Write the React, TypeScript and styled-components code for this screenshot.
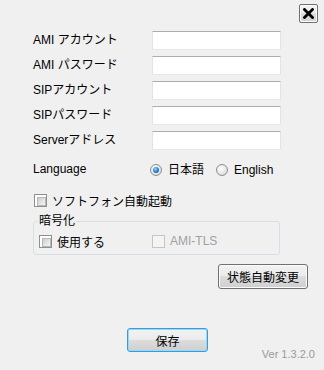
import React from "react";
import styled, { createGlobalStyle } from "styled-components";

const Global = createGlobalStyle`
  html, body { margin: 0; padding: 0; background: #f0f0f0; }
  body { font-family: "Liberation Sans", "Noto Sans CJK JP", sans-serif; font-size: 12px; color: #000; }
  * { box-sizing: border-box; }
`;

const Window = styled.div`
  width: 324px;
  height: 370px;
  background: #f0f0f0;
  display: flex;
  flex-direction: column;
  overflow: hidden;
`;

const TopBar = styled.div`
  display: flex;
  justify-content: flex-end;
  padding: 4px 6px 0 0;
  height: 23px;
`;

const CloseButton = styled.button`
  width: 19px;
  height: 19px;
  padding: 0;
  border: 1px solid #707070;
  border-radius: 2px;
  background: linear-gradient(#f4f4f4 0%, #ececec 50%, #dedede 50%, #d2d2d2 100%);
  box-shadow: inset 0 0 0 1px #fcfcfc;
  display: flex;
  align-items: center;
  justify-content: center;
`;

const Form = styled.div`
  display: grid;
  grid-template-columns: 119px 129px;
  row-gap: 6px;
  align-items: center;
  margin: 8px 0 0 33px;
`;

const Label = styled.span`
  line-height: 19px;
  white-space: nowrap;
`;

const TextInput = styled.input`
  width: 129px;
  height: 19px;
  margin: 0;
  padding: 0 3px;
  background: #fff;
  border: 1px solid #e2e3ea;
  border-top-color: #abadb3;
  border-bottom-color: #e3e9ef;
  border-radius: 1px;
  font: inherit;
  outline: none;
`;

const LangRow = styled.div`
  display: grid;
  grid-template-columns: 117px auto;
  align-items: center;
  margin: 10px 0 0 33px;
  height: 16px;
`;

const RadioGroup = styled.div`
  display: flex;
  align-items: center;
`;

const RadioItem = styled.label<{ $first?: boolean }>`
  display: flex;
  align-items: center;
  gap: 6px;
  margin-left: ${(p) => (p.$first ? "0" : "12px")};
  line-height: 16px;
`;

const RadioCircle = styled.span<{ $checked?: boolean }>`
  width: 12px;
  height: 12px;
  border-radius: 50%;
  border: 1px solid #8e8f8f;
  background: radial-gradient(circle at 40% 35%, #ffffff 0%, #e4e4e4 60%, #cfcfcf 100%);
  display: flex;
  align-items: center;
  justify-content: center;
  flex: none;
  &::after {
    content: "";
    display: ${(p) => (p.$checked ? "block" : "none")};
    width: 6px;
    height: 6px;
    border-radius: 50%;
    background: radial-gradient(circle at 40% 35%, #9fdcff 0%, #2e8ad8 45%, #0d4c8a 100%);
  }
`;

const CheckRow = styled.label<{ $disabled?: boolean }>`
  display: flex;
  align-items: center;
  gap: 5px;
  height: 14px;
  color: ${(p) => (p.$disabled ? "#a0a0a0" : "#000")};
`;

const AutoStart = styled(CheckRow)`
  margin: 17px 0 0 34px;
`;

const CheckBox = styled.span<{ $disabled?: boolean }>`
  width: 13px;
  height: 13px;
  flex: none;
  border: 1px solid ${(p) => (p.$disabled ? "#c5c5c5" : "#8e8f8f")};
  background: ${(p) => (p.$disabled ? "#f4f4f4" : "#fff")};
  padding: 2px;
  &::after {
    content: "";
    display: block;
    width: 100%;
    height: 100%;
    background: ${(p) =>
      p.$disabled
        ? "#f4f4f4"
        : "linear-gradient(135deg, #cbcbcb 0%, #e6e6e6 60%, #f4f4f4 100%)"};
    border: ${(p) => (p.$disabled ? "none" : "1px solid #b8b8b8")};
  }
`;

const Group = styled.fieldset`
  width: 247px;
  margin: 7px 0 0 33px;
  padding: 6px 4px 6px 4px;
  border: 1px solid #d5dfe5;
  border-radius: 3px;
  min-width: 0;
`;

const Legend = styled.legend`
  padding: 0 1px;
  line-height: 14px;
`;

const GroupRow = styled.div`
  display: grid;
  grid-template-columns: 113px auto;
  padding-left: 1px;
`;

const ActionRow = styled.div`
  display: flex;
  justify-content: flex-end;
  padding-right: 16px;
  margin-top: 9px;
`;

const PushButton = styled.button<{ $default?: boolean }>`
  height: ${(p) => (p.$default ? "24px" : "25px")};
  width: ${(p) => (p.$default ? "81px" : "90px")};
  padding: 0;
  font: inherit;
  font-size: 12px;
  color: #000;
  border: 1px solid ${(p) => (p.$default ? "#3c9ad8" : "#707070")};
  border-radius: 3px;
  background: linear-gradient(#f2f2f2 0%, #ebebeb 50%, #dddddd 50%, #cfcfcf 100%);
  box-shadow: inset 0 0 0 1px ${(p) => (p.$default ? "#8fdcfa" : "#fbfbfb")};
`;

const BottomRow = styled.div`
  display: flex;
  justify-content: space-between;
  align-items: flex-start;
  margin-top: 39px;
  padding: 0 9px 0 127px;
`;

const Version = styled.span`
  margin-top: 20px;
  font-size: 11px;
  line-height: 13px;
  color: #9a9a9a;
`;

const fields = ["AMI アカウント", "AMI パスワード", "SIPアカウント", "SIPパスワード", "Serverアドレス"];

export default function App() {
  return (
    <>
      <Global />
      <Window>
        <TopBar>
          <CloseButton aria-label="閉じる">
            <svg width="11" height="11" viewBox="0 0 11 11">
              <path d="M1.5 1.5 L9.5 9.5 M9.5 1.5 L1.5 9.5" stroke="#000" strokeWidth="2.8" strokeLinecap="square" />
            </svg>
          </CloseButton>
        </TopBar>
        <Form>
          {fields.map((f) => (
            <React.Fragment key={f}>
              <Label>{f}</Label>
              <TextInput />
            </React.Fragment>
          ))}
        </Form>
        <LangRow>
          <Label>Language</Label>
          <RadioGroup>
            <RadioItem $first>
              <RadioCircle $checked />
              日本語
            </RadioItem>
            <RadioItem>
              <RadioCircle />
              English
            </RadioItem>
          </RadioGroup>
        </LangRow>
        <AutoStart>
          <CheckBox />
          ソフトフォン自動起動
        </AutoStart>
        <Group>
          <Legend>暗号化</Legend>
          <GroupRow>
            <CheckRow>
              <CheckBox />
              使用する
            </CheckRow>
            <CheckRow $disabled>
              <CheckBox $disabled />
              AMI-TLS
            </CheckRow>
          </GroupRow>
        </Group>
        <ActionRow>
          <PushButton>状態自動変更</PushButton>
        </ActionRow>
        <BottomRow>
          <PushButton $default>保存</PushButton>
          <Version>Ver 1.3.2.0</Version>
        </BottomRow>
      </Window>
    </>
  );
}
